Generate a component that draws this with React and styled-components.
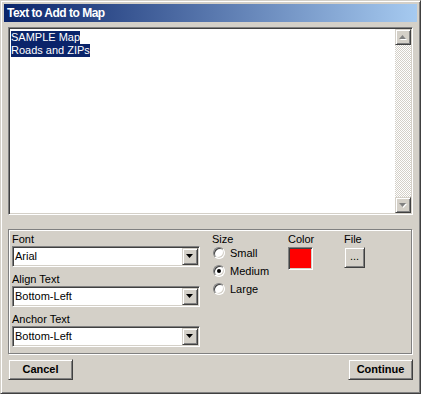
import React from "react";
import styled, { createGlobalStyle } from "styled-components";

const GlobalStyle = createGlobalStyle`
  body {
    margin: 0;
    background: #d4d0c8;
    font-family: "Liberation Sans", Arial, sans-serif;
    font-size: 11px;
    color: #000;
  }
`;

const raised = `
  border: 1px solid;
  border-color: #d4d0c8 #404040 #404040 #d4d0c8;
  box-shadow: inset 1px 1px #fff, inset -1px -1px #808080;
`;

const sunken = `
  border: 1px solid;
  border-color: #808080 #fff #fff #808080;
  box-shadow: inset 1px 1px #404040, inset -1px -1px #d4d0c8;
`;

const Window = styled.div`
  width: 421px;
  height: 394px;
  box-sizing: border-box;
  background: #d4d0c8;
  padding: 3px;
  display: flex;
  flex-direction: column;
  ${raised}
`;

const TitleBar = styled.div`
  height: 18px;
  flex: none;
  padding-left: 3px;
  background: linear-gradient(to right, #0a246a, #a6caf0);
  color: #fff;
  font-weight: bold;
  font-size: 12px;
  letter-spacing: -0.5px;
  line-height: 18px;
`;

const Body = styled.div`
  flex: 1;
  padding: 5px 4px 0;
  display: flex;
  flex-direction: column;
`;

const TextBox = styled.div`
  height: 188px;
  box-sizing: border-box;
  background: #fff;
  display: flex;
  padding: 1px;
  ${sunken}
`;

const TextContent = styled.div`
  flex: 1;
  padding: 2px 1px;
  font-size: 11px;
  line-height: 13px;
`;

const Selected = styled.span`
  display: table;
  background: #0a246a;
  color: #fff;
`;

const Scrollbar = styled.div`
  width: 16px;
  display: flex;
  flex-direction: column;
`;

const ScrollButton = styled.div`
  width: 16px;
  height: 16px;
  box-sizing: border-box;
  background: #d4d0c8;
  display: flex;
  align-items: center;
  justify-content: center;
  ${raised}
`;

const Track = styled.div`
  flex: 1;
  background-image: conic-gradient(#fff 25%, #d4d0c8 0 50%, #fff 0 75%, #d4d0c8 0);
  background-size: 2px 2px;
`;

const GroupBox = styled.div`
  margin-top: 14px;
  margin-right: 1px;
  height: 125px;
  box-sizing: border-box;
  border: 1px solid #808080;
  box-shadow: inset 1px 1px #fff, 1px 1px #fff;
  padding: 2px 3px;
  display: grid;
  grid-template-columns: 188px 64px 44px auto;
  column-gap: 12px;
  align-items: start;
`;

const Column = styled.div`
  display: flex;
  flex-direction: column;
  gap: ${({ $gap }) => $gap || 0}px;
`;

const Field = styled.div`
  display: flex;
  flex-direction: column;
`;

const Label = styled.div`
  line-height: 14px;
  white-space: nowrap;
`;

const Select = styled.div`
  height: 21px;
  box-sizing: border-box;
  background: #fff;
  display: flex;
  padding: 1px;
  ${sunken}
`;

const SelectValue = styled.div`
  flex: 1;
  padding-left: 1px;
  line-height: 17px;
`;

const DropButton = styled.div`
  width: 16px;
  height: 17px;
  box-sizing: border-box;
  background: #d4d0c8;
  display: flex;
  align-items: center;
  justify-content: center;
  ${raised}
`;

const RadioList = styled.div`
  margin-top: -2px;
  display: flex;
  flex-direction: column;
`;

const RadioRow = styled.label`
  height: 18px;
  display: flex;
  align-items: center;
  gap: 5px;
  padding-left: 1px;
`;

const RadioCircle = styled.span`
  width: 12px;
  height: 12px;
  box-sizing: border-box;
  border-radius: 50%;
  background: #fff;
  border: 1px solid;
  border-color: #808080 #fff #fff #808080;
  box-shadow: inset 1px 1px #404040, inset -1px -1px #d4d0c8;
  display: flex;
  align-items: center;
  justify-content: center;

  &::after {
    content: "";
    width: 4px;
    height: 4px;
    border-radius: 50%;
    background: ${({ $checked }) => ($checked ? "#000" : "transparent")};
  }
`;

const Swatch = styled.div`
  margin-top: 1px;
  width: 25px;
  height: 23px;
  box-sizing: border-box;
  background: ${({ $color }) => $color};
  ${sunken}
`;

const SmallButton = styled.div`
  margin-top: 1px;
  width: 21px;
  height: 21px;
  box-sizing: border-box;
  background: #d4d0c8;
  text-align: center;
  line-height: 16px;
  ${raised}
`;

const Footer = styled.div`
  margin-top: 5px;
  display: flex;
  justify-content: space-between;
`;

const Button = styled.div`
  width: 65px;
  height: 21px;
  box-sizing: border-box;
  background: #d4d0c8;
  font-weight: bold;
  text-align: center;
  line-height: 19px;
  ${raised}
`;

const Arrow = ({ dir = "down", disabled }) => {
  const pts = dir === "up" ? "3.5,0 7,4 0,4" : "0,0 7,0 3.5,4";
  return (
    <svg width="8" height="5" viewBox="0 0 8 5">
      {disabled && <polygon points={pts} fill="#fff" transform="translate(1,1)" />}
      <polygon points={pts} fill={disabled ? "#808080" : "#000"} />
    </svg>
  );
};

const Dropdown = ({ value }) => (
  <Select>
    <SelectValue>{value}</SelectValue>
    <DropButton>
      <Arrow dir="down" />
    </DropButton>
  </Select>
);

const sizes = [
  { label: "Small", checked: false },
  { label: "Medium", checked: true },
  { label: "Large", checked: false },
];

export default function App() {
  return (
    <>
      <GlobalStyle />
      <Window>
        <TitleBar>Text to Add to Map</TitleBar>
        <Body>
          <TextBox>
            <TextContent>
              <Selected>SAMPLE Map</Selected>
              <Selected>Roads and ZIPs</Selected>
            </TextContent>
            <Scrollbar>
              <ScrollButton>
                <Arrow dir="up" disabled />
              </ScrollButton>
              <Track />
              <ScrollButton>
                <Arrow dir="down" disabled />
              </ScrollButton>
            </Scrollbar>
          </TextBox>

          <GroupBox>
            <Column $gap={5}>
              <Field>
                <Label>Font</Label>
                <Dropdown value="Arial" />
              </Field>
              <Field>
                <Label>Align Text</Label>
                <Dropdown value="Bottom-Left" />
              </Field>
              <Field>
                <Label>Anchor Text</Label>
                <Dropdown value="Bottom-Left" />
              </Field>
            </Column>
            <Column>
              <Label>Size</Label>
              <RadioList>
                {sizes.map((s) => (
                  <RadioRow key={s.label}>
                    <RadioCircle $checked={s.checked} />
                    {s.label}
                  </RadioRow>
                ))}
              </RadioList>
            </Column>
            <Column>
              <Label>Color</Label>
              <Swatch $color="#ff0000" />
            </Column>
            <Column>
              <Label>File</Label>
              <SmallButton>...</SmallButton>
            </Column>
          </GroupBox>

          <Footer>
            <Button>Cancel</Button>
            <Button>Continue</Button>
          </Footer>
        </Body>
      </Window>
    </>
  );
}
